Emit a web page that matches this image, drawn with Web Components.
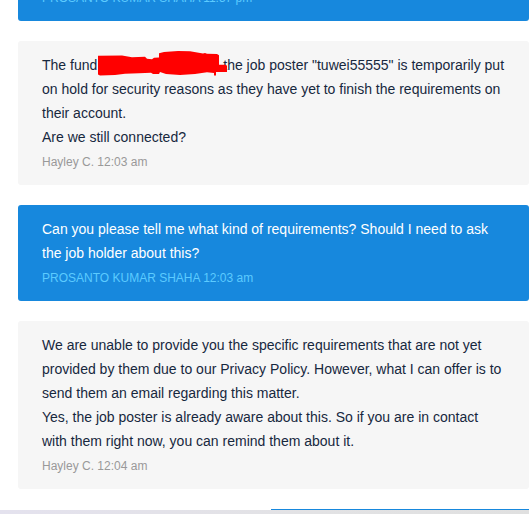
<!DOCTYPE html>
<html lang="en">
<head>
<meta charset="utf-8">
<title>Support chat</title>
<style>
body { margin: 0; background: #fff; font-family: "Liberation Sans", Arial, sans-serif; font-size: 14px; line-height: 24px; }
</style>
</head>
<body>
<chat-thread>
  <chat-message mine><span slot="meta">PROSANTO KUMAR SHAHA 11:57 pm</span></chat-message>
  <chat-message>
    <div>The fund<redaction-mark></redaction-mark>the job poster "tuwei55555" is temporarily put on hold for security reasons as they have yet to finish the requirements on their account.</div>
    <div>Are we still connected?</div>
    <span slot="meta">Hayley C. 12:03 am</span>
  </chat-message>
  <chat-message mine>
    <div>Can you please tell me what kind of requirements? Should I need to ask the job holder about this?</div>
    <span slot="meta">PROSANTO KUMAR SHAHA 12:03 am</span>
  </chat-message>
  <chat-message>
    <div>We are unable to provide you the specific requirements that are not yet provided by them due to our Privacy Policy. However, what I can offer is to send them an email regarding this matter.</div>
    <div>Yes, the job poster is already aware about this. So if you are in contact with them right now, you can remind them about it.</div>
    <span slot="meta">Hayley C. 12:04 am</span>
  </chat-message>
  <next-message-edge></next-message-edge>
  <chat-footer slot="footer"></chat-footer>
</chat-thread>
<script>
const define = (name, html) => {
  const template = document.createElement("template");
  template.innerHTML = html;
  customElements.define(name, class extends HTMLElement {
    constructor() {
      super();
      this.attachShadow({ mode: "open" }).append(template.content.cloneNode(true));
    }
  });
};

define("chat-thread", `
<style>
:host { display: flex; flex-direction: column; height: 100vh; overflow: hidden; }
.log { flex: 1; min-height: 0; overflow: hidden; display: flex; flex-direction: column; justify-content: flex-end; gap: 20px; padding-left: 18px; }
</style>
<div class="log"><slot></slot></div>
<slot name="footer"></slot>`);

define("chat-message", `
<style>
:host { display: block; flex: none; padding: 12px 24px 11px; border-radius: 3px; background: #f6f6f6; color: #17283e; --meta: #999; }
:host([mine]) { background: #1788dd; color: #fff; --meta: #5ccbff; }
.meta { padding-top: 1px; font-size: 12px; color: var(--meta); }
</style>
<slot></slot>
<div class="meta"><slot name="meta"></slot></div>`);

// Hand-drawn red scribble over the hidden name.
define("redaction-mark", `
<style>
:host { display: inline-block; position: relative; width: 126px; height: 12px; }
svg { position: absolute; left: 1px; bottom: -7px; overflow: visible; }
</style>
<svg width="129" height="26" viewBox="98 51 129 26" fill="#f00" aria-hidden="true"><path d="M98 55.7L122 55.4L132 57.2L145 56.8L147 58.8L152 59.3L154 57.8L159 57.5L159 53.2L164 52L178 51L190 51.3L203 53.5L205 53L207 53.7L217 54L219 55.3V64.7H226L227 66V72H216V75.5H214V73L207 72.3L195 74L180 75L166 74L160 72L159 74L153 74L151 72.7L139 73.3L125 73.7L115 75L100 75.5L98 74.5Z"/></svg>`);

define("next-message-edge", `
<style>
:host { display: block; flex: none; height: 1px; width: 50.5%; align-self: flex-end; background: #1788dd; }
</style>`);

define("chat-footer", `
<style>
:host { display: block; flex: none; height: 4px; background: linear-gradient(90deg, #e4e2ee, #e2e2e4 60%, #e0e0e0); }
</style>`);
</script>
</body>
</html>
